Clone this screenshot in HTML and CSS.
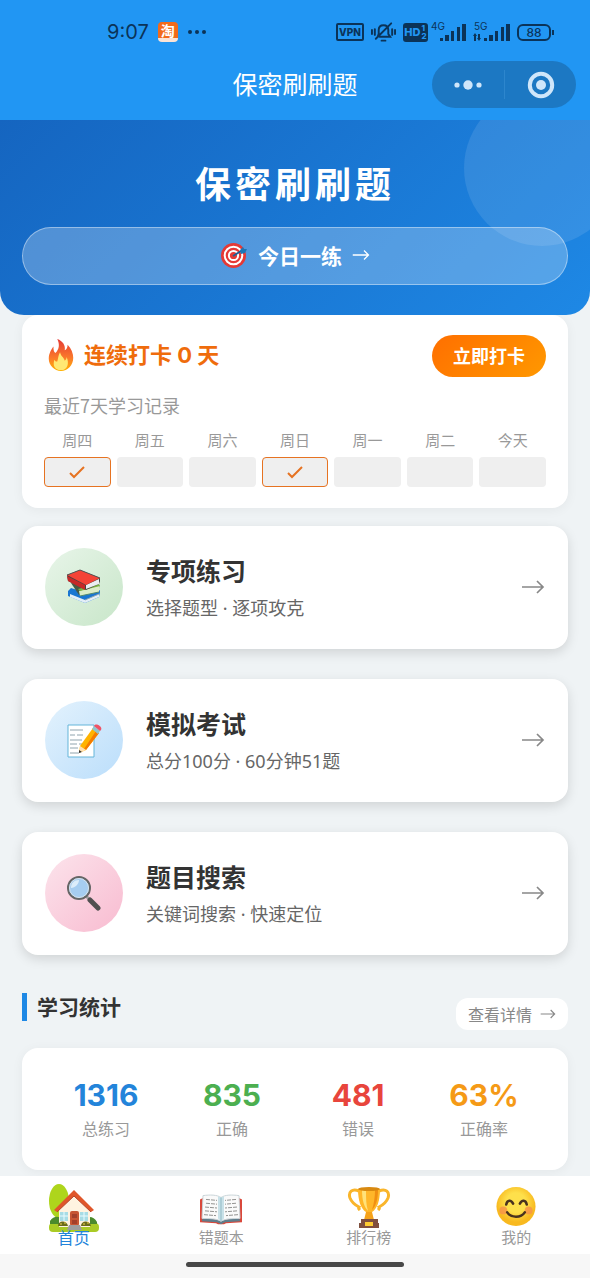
FILE: index.html
```html
<!DOCTYPE html>
<html lang="zh-CN">
<head>
  <meta charset="UTF-8">
  <meta name="viewport" content="width=device-width, initial-scale=1">
  <title>保密刷刷题</title>
  <link rel="stylesheet" href="styles.css">
</head>
<body>
<header class="topbar">
  <div class="status">
    <div class="status-left">
      <span class="time">9:07</span>
      <span class="app">淘</span>
      <svg width="20" height="6" viewBox="0 0 20 6" fill="currentColor"><circle cx="3" cy="3" r="2"/><circle cx="10" cy="3" r="2"/><circle cx="17" cy="3" r="2"/></svg>
    </div>
    <div class="status-right">
      <span class="vpn">VPN</span>
      <svg width="25" height="22" viewBox="0 0 26 22" fill="none" stroke="currentColor" stroke-width="2" stroke-linecap="round">
        <path d="M7 16l1-3V9c0-3 2-5 5-5s5 2 5 5v4l2 3H9M11 20h4M21 2L5 18M4 8v6M1 9v4M22 8v6M25 9v4"/>
      </svg>
      <span class="hd">HD<small>1<br>2</small></span>
      <span class="signal">
        <small>4G</small>
        <svg width="27" height="18" viewBox="0 0 27 18" fill="currentColor"><path d="M1 15h3v3H1zM6 12h4v6H6zM12 8h3v10h-3zM18 4h3v14h-3zM23 1h4v17h-4z"/></svg>
      </span>
      <span class="signal signal-5g">
        <small>5G</small>
        <svg width="37" height="18" viewBox="0 0 37 18" fill="currentColor"><path d="M2 10l2 3H3v5H1v-5H0zM5 11h2v4h1l-2 3-2-3h1zM11 15h3v3h-3zM16 12h4v6h-4zM22 8h3v10h-3zM28 4h3v14h-3zM33 1h4v17h-4z"/></svg>
      </span>
      <span class="battery">88</span>
    </div>
  </div>
  <div class="nav">
    <span class="nav-title">保密刷刷题</span>
    <div class="capsule">
      <button type="button" aria-label="更多">
        <svg width="30" height="12" viewBox="0 0 30 12" fill="currentColor"><circle cx="4" cy="6" r="2.6"/><circle cx="15" cy="6" r="4.7"/><circle cx="26" cy="6" r="2.6"/></svg>
      </button>
      <button type="button" aria-label="关闭">
        <svg width="28" height="28" viewBox="0 0 28 28"><circle cx="14" cy="14" r="11.2" fill="none" stroke="currentColor" stroke-width="4"/><circle cx="14" cy="14" r="5" fill="currentColor"/></svg>
      </button>
    </div>
  </div>
</header>

<section class="hero">
  <h1>保密刷刷题</h1>
  <a class="daily" href="#daily">
    <svg width="28" height="28" viewBox="0 0 28 28">
      <circle cx="13.5" cy="14.5" r="12.5" fill="#e53935"/><circle cx="13.5" cy="14.5" r="8.8" fill="none" stroke="#fff" stroke-width="2"/>
      <circle cx="13.5" cy="14.5" r="4.6" fill="none" stroke="#fff" stroke-width="2"/>
      <path d="M13 15l8-5" stroke="#1f5f94" stroke-width="2"/><path d="M20 9l3-3 1 2 3 0-2 4-4 1z" fill="#1976b8"/>
    </svg>
    今日一练
    <svg class="arrow" width="18" height="14" viewBox="0 0 24 18"><path d="M1 9h21M16 3l6 6-6 6"/></svg>
  </a>
</section>

<main>
  <section class="card checkin">
    <div class="checkin-head">
      <h2>
        <svg width="26" height="32" viewBox="0 0 26 34">
          <defs><linearGradient id="flame" x2="0" y2="1"><stop stop-color="#e53935"/><stop offset=".6" stop-color="#fb7b2a"/><stop offset="1" stop-color="#ffb300"/></linearGradient></defs>
          <path d="M9 0c6 2 9 7 8 12 2-1 3-3 3-6 4 4 6 9 6 14 0 8-6 14-13 14S0 28 0 21c0-6 3-10 5-13 0 3 0 5 2 7 4-4 5-9 2-15z" fill="url(#flame)"/>
          <path d="M12 14c1 5 4 5 5 9 1-1 2-2 2-4 3 7 1 14-6 14S4 28 6 22c1 2 2 2 3 2 1-3 1-7 3-10z" fill="#ffe873"/>
        </svg>
        连续打卡 0 天
      </h2>
      <button class="checkin-btn" type="button">立即打卡</button>
    </div>
    <p class="record-title">最近7天学习记录</p>
    <ul class="week">
      <li>周四<span class="day done"><svg width="18" height="14" viewBox="0 0 18 14"><path d="M2 8l4 4L16 2"/></svg></span></li>
      <li>周五<span class="day"></span></li>
      <li>周六<span class="day"></span></li>
      <li>周日<span class="day done"><svg width="18" height="14" viewBox="0 0 18 14"><path d="M2 8l4 4L16 2"/></svg></span></li>
      <li>周一<span class="day"></span></li>
      <li>周二<span class="day"></span></li>
      <li>今天<span class="day"></span></li>
    </ul>
  </section>

  <nav class="menu">
    <a class="card menu-item" href="#practice">
      <span class="menu-icon green">
        <svg width="36" height="36" viewBox="0 0 36 36">
          <path d="M2 22l3-3 16 5 13-3v2l-1 5-14 6-17-7z" fill="#1976d2"/><path d="M4 25l15 6 14-6v3l-14 6-15-6z" fill="#e3eef7"/>
          <path d="M19 31l14-6" stroke="#90a4ae"/>
          <path d="M5 14l8 12 21-7-1-3z" fill="#455a46"/><path d="M13 22l19-6 2 2-1 5-19 4z" fill="#dcedc8"/><path d="M12 20l21-5 1 2-20 5z" fill="#7cb342"/><path d="M14 27l19-4" stroke="#558b6e"/>
          <path d="M1 6L14 1l20 8v3l-1 3-13 6L2 12z" fill="#424242"/><path d="M1 7l18 9v5L2 12z" fill="#c62828"/><path d="M20 16l13-6v5l-13 5z" fill="#eceff1"/>
          <path d="M1 6l13-5 20 8-14 7z" fill="#f44336"/><path d="M1 6l13-5 20 8" fill="none" stroke="#555"/>
        </svg>
      </span>
      <span class="menu-text"><strong>专项练习</strong><span>选择题型 · 逐项攻克</span></span>
      <svg class="arrow" width="24" height="18" viewBox="0 0 24 18"><path d="M1 9h21M16 3l6 6-6 6"/></svg>
    </a>
    <a class="card menu-item" href="#exam">
      <span class="menu-icon blue">
        <svg width="36" height="36" viewBox="0 0 36 36">
          <path d="M2 3h26v32H2z" fill="#fff" stroke="#64b5d9"/>
          <path d="M4 8h13M4 13h5m2 0h6M4 18h12M4 22h7m2 0h4M4 26h8M4 31h9" stroke="#90a4ae"/>
          <path d="M13 31l1-7L27 6l6 5-13 17z" fill="#ffb300"/><path d="M18 27L30 9l3 2-13 17z" fill="#f57c00"/><path d="M13 31l1-7 6 4z" fill="#ffe0b2"/><path d="M13 31v-3l3 2z" fill="#333"/>
          <path d="M26 7l2-3 6 5-2 3z" fill="#90c5ce"/><path d="M28 4c2-4 9 1 7 4l-1 1z" fill="#ef5366"/>
        </svg>
      </span>
      <span class="menu-text"><strong>模拟考试</strong><span>总分100分 · 60分钟51题</span></span>
      <svg class="arrow" width="24" height="18" viewBox="0 0 24 18"><path d="M1 9h21M16 3l6 6-6 6"/></svg>
    </a>
    <a class="card menu-item" href="#search">
      <span class="menu-icon pink">
        <svg width="36" height="36" viewBox="0 0 36 36">
          <path d="M20 21l5 5" stroke="#9e9e9e" stroke-width="3"/><path d="M24 25l8 8" stroke="#505050" stroke-width="5" stroke-linecap="round"/>
          <circle cx="13" cy="13" r="11" fill="#a6cdf0" stroke="#666" stroke-width="2"/><circle cx="13" cy="13" r="9.5" fill="none" stroke="#d5e2ec"/>
          <path d="M5 13c0-5 3-8 8-8 0 4-4 8-8 8z" fill="#dcedfa"/>
        </svg>
      </span>
      <span class="menu-text"><strong>题目搜索</strong><span>关键词搜索 · 快速定位</span></span>
      <svg class="arrow" width="24" height="18" viewBox="0 0 24 18"><path d="M1 9h21M16 3l6 6-6 6"/></svg>
    </a>
  </nav>

  <section>
    <div class="section-head">
      <h2>学习统计</h2>
      <a class="more" href="#stats">查看详情 <svg class="arrow" width="16" height="12" viewBox="0 0 24 18"><path d="M1 9h21M16 3l6 6-6 6"/></svg></a>
    </div>
    <dl class="card stats">
      <div class="stat total"><dt>总练习</dt><dd>1316</dd></div>
      <div class="stat right"><dt>正确</dt><dd>835</dd></div>
      <div class="stat wrong"><dt>错误</dt><dd>481</dd></div>
      <div class="stat rate"><dt>正确率</dt><dd>63%</dd></div>
    </dl>
  </section>
</main>

<footer class="bottom">
  <nav class="tabs">
    <a class="tab active" href="#home">
      <svg width="50" height="48" viewBox="0 0 50 48">
        <ellipse cx="10" cy="17" rx="10" ry="17" fill="#aed51c"/><rect y="39" width="50" height="9" rx="4" fill="#aacb25"/>
        <path d="M1 37c4-6 10-5 13-1h22c3-5 9-3 12 2v2H1z" fill="#4b8a2c"/>
        <path d="M10 23L26 10l15 13v20H10z" fill="#fff3e0"/><path d="M5 26L25 6l20 20-3 2-17-16L8 28z" fill="#e0562a"/><path d="M8 28l17-16 17 16" fill="none" stroke="#b5452a"/>
        <path d="M11 28h8v9h-8zM31 28h8v9h-8z" fill="#a7dce5"/><path d="M15 28v9M11 32h8M35 28v9M31 32h8" stroke="#e8fbff"/>
        <rect x="21" y="27" width="9" height="15" rx="2" fill="#c75532"/><path d="M23 30h5v4h-5zM23 36h5v4h-5z" fill="#a3402a"/><path d="M20 41h11l2 5H18z" fill="#9e9e9e"/>
        <path d="M9 42c0-6 9-6 10 0zM32 42c0-6 9-6 10 0z" fill="#6b6c1b"/><g fill="#c5b33b"><circle cx="12" cy="40" r="1"/><circle cx="16" cy="39" r="1"/><circle cx="35" cy="40" r="1"/><circle cx="39" cy="39" r="1"/></g>
      </svg>
      首页
    </a>
    <a class="tab" href="#mistakes">
      <svg width="42" height="40" viewBox="0 0 42 42" preserveAspectRatio="none">
        <path d="M0 12l4-2v22l13 1 4 2 4-2 13-1V10l4 2v24l-16 1-2 1h-6l-2-1-16-1z" fill="#d9483b"/>
        <path d="M2 33l3-1 13 1 3 2 3-2 13-1 3 1v2l-15 1-4 2-4-2-15-1z" fill="#607d8b"/>
        <path d="M3 8c7-1 14-1 18 2 4-3 11-3 18-2l1 24c-7 0-15 0-19 3-4-3-12-3-19-3z" fill="#fafafa" stroke="#c9d4d8"/>
        <path d="M18 9l3 1 3-1v23l-3 3-3-3z" fill="#c8e1e8"/><path d="M21 10v25" stroke="#8fb7c3"/>
        <path d="M6 12l11 1M6 16l11 1M5 20l12 1M5 24l12 1M4 28l12 1M36 12l-11 1M36 16l-11 1M37 20l-12 1M37 24l-12 1M38 28l-12 1" stroke="#90908e" stroke-dasharray="4 1"/>
      </svg>
      错题本
    </a>
    <a class="tab" href="#rank">
      <svg width="44" height="42" viewBox="0 0 44 42">
        <path d="M12 5C5 2 1 6 3 12c2 5 5 7 9 9-1 2 0 2 1 3M32 5c7-3 11 1 9 7-2 5-5 7-9 9 1 2 0 2-1 3" fill="none" stroke="#f9b52b" stroke-width="3"/>
        <path d="M19 23h6v3l2 8H17l2-8z" fill="#f6a21a"/><path d="M11 3h22c0 12-3 20-8 23h-6C14 23 11 15 11 3z" fill="#ffb629"/>
        <path d="M15 4h4c0 8 0 15 2 21-4-4-6-11-6-21z" fill="#ffe27a"/><path d="M28 4h3c0 9-2 16-6 20 2-7 3-13 3-20z" fill="#f08f12"/><ellipse cx="22" cy="3" rx="11" ry="2" fill="#d88910"/>
        <path d="M14 33h17v4h1v5H12v-5h2z" fill="#80503f"/><path d="M18 36h8v4h-8z" fill="#ffcc32"/>
      </svg>
      排行榜
    </a>
    <a class="tab" href="#me">
      <svg width="42" height="41" viewBox="0 0 42 42">
        <defs><radialGradient id="face" cx=".5" cy=".4"><stop offset=".5" stop-color="#fee04b"/><stop offset="1" stop-color="#f8b91f"/></radialGradient></defs>
        <circle cx="21" cy="20" r="20" fill="url(#face)"/><circle cx="8" cy="24" r="4" fill="#f58d4c" opacity=".75"/><circle cx="34" cy="24" r="4" fill="#f58d4c" opacity=".75"/>
        <path d="M11 18c1-5 5-5 7-1M25 17c2-4 6-4 7 1M12 26c4 6 14 6 18 0" fill="none" stroke="#4a321e" stroke-width="2.6" stroke-linecap="round"/>
      </svg>
      我的
    </a>
  </nav>
  <div class="home-bar"></div>
</footer>
</body>
</html>
```
FILE: styles.css
```css
* {
  box-sizing: border-box;
}

body {
  margin: 0;
  min-height: 100vh;
  display: flex;
  flex-direction: column;
  background: #eff3f5;
  color: #333;
  font-family: "Noto Sans CJK SC", "Noto Sans", sans-serif;
  font-size: 16px;
}

h1, h2, p, ul, dl, dd {
  margin: 0;
  padding: 0;
}

a {
  color: inherit;
  text-decoration: none;
}

svg {
  display: block;
  flex: none;
}

button {
  border: 0;
  padding: 0;
  font-family: inherit;
  cursor: pointer;
}

.arrow {
  fill: none;
  stroke: currentColor;
  stroke-width: 1.7;
}

/* top bar */
.topbar {
  height: 120px;
  background: #2196f3;
}

.status {
  display: flex;
  justify-content: space-between;
  align-items: center;
  height: 60px;
  padding: 4px 39px 0 107px;
  color: #0b3358;
  font-family: Inter, sans-serif;
}

.status-left,
.status-right {
  display: flex;
  align-items: center;
}

.status-left {
  gap: 9px;
}

.status-right {
  gap: 7px;
}

.time {
  font-size: 20px;
}

.app {
  width: 20px;
  height: 20px;
  border-radius: 4px;
  border-bottom: 4px solid #fbe3d6;
  background: #f26a1b;
  color: #fff;
  font: bold 14px/16px "Noto Sans CJK SC", sans-serif;
  text-align: center;
}

.vpn {
  width: 28px;
  border: 2px solid;
  border-radius: 2px;
  font-size: 10px;
  font-weight: 800;
  line-height: 14px;
  text-align: center;
}

.hd {
  display: flex;
  justify-content: center;
  align-items: center;
  gap: 1px;
  width: 25px;
  height: 19px;
  margin-right: 4px;
  border-radius: 3px;
  background: #0b3358;
  color: #2196f3;
  font-size: 11px;
  font-weight: 800;
}

.hd small {
  font-size: 8px;
  line-height: 8px;
}

.signal {
  position: relative;
}

.signal small {
  position: absolute;
  top: -3px;
  left: -8px;
  font-size: 10px;
  line-height: 12px;
}

.signal-5g small {
  left: 1px;
}

.battery {
  position: relative;
  width: 34px;
  border: 2px solid;
  border-radius: 6px;
  font-size: 12px;
  font-weight: 500;
  line-height: 13px;
  text-align: center;
}

.battery::after {
  content: "";
  position: absolute;
  top: 4px;
  right: -5px;
  width: 2px;
  height: 5px;
  background: #0b3358;
}

.nav {
  position: relative;
  display: flex;
  justify-content: center;
  align-items: center;
  height: 48px;
  padding-bottom: 3px;
}

.nav-title {
  color: #fff;
  font-size: 25px;
}

.capsule {
  position: absolute;
  top: 1px;
  right: 14px;
  display: grid;
  grid-template-columns: 1fr 1fr;
  width: 144px;
  height: 47px;
  border-radius: 24px;
  background: #1c78c3;
}

.capsule button {
  display: grid;
  place-items: center;
  margin: 9px 0;
  background: none;
  color: #cfe6fa;
}

.capsule button + button {
  border-left: 1px solid #2d86cd;
}

/* hero */
.hero {
  position: relative;
  overflow: hidden;
  padding: 37px 22px 30px;
  border-radius: 0 0 24px 24px;
  background: linear-gradient(135deg, #1565c0, #1e88e5);
  color: #fff;
}

.hero::before {
  content: "";
  position: absolute;
  top: -30px;
  right: -30px;
  width: 156px;
  height: 156px;
  border-radius: 50%;
  background: rgba(255, 255, 255, .1);
}

.hero h1 {
  margin-bottom: 20px;
  font-size: 36px;
  line-height: 50px;
  letter-spacing: 4px;
  text-align: center;
}

.daily {
  position: relative;
  display: flex;
  justify-content: center;
  align-items: center;
  gap: 10px;
  height: 58px;
  padding-bottom: 2px;
  border: 1px solid rgba(255, 255, 255, .4);
  border-radius: 29px;
  background: rgba(255, 255, 255, .25);
  font-size: 21px;
  font-weight: bold;
}

/* content */
main {
  flex: 1;
  padding: 0 22px 6px;
}

.card {
  border-radius: 16px;
  background: #fff;
  box-shadow: 0 2px 12px rgba(0, 0, 0, .05);
}

.checkin {
  padding: 20px 22px 21px;
}

.checkin-head {
  display: flex;
  justify-content: space-between;
  align-items: center;
}

.checkin h2 {
  display: flex;
  align-items: center;
  gap: 10px;
  padding: 0 0 2px 4px;
  color: #ef6c0c;
  font-family: Inter, "Noto Sans CJK SC", sans-serif;
  font-size: 22px;
  line-height: 34px;
}

.checkin-btn {
  width: 114px;
  height: 42px;
  padding-bottom: 2px;
  border-radius: 21px;
  background: linear-gradient(135deg, #ff6f00, #ff9800);
  color: #fff;
  font-size: 18px;
  font-weight: bold;
}

.record-title {
  margin: 16px 0 13px;
  color: #999;
  font-size: 18px;
  line-height: 24px;
}

.week {
  display: grid;
  grid-template-columns: repeat(7, 1fr);
  gap: 6px;
  color: #999;
  font-size: 15px;
  line-height: 20px;
  list-style: none;
  text-align: center;
}

.day {
  display: grid;
  place-items: center;
  height: 30px;
  margin-top: 7px;
  border-radius: 4px;
  background: #efefef;
}

.done {
  border: 1px solid #e67322;
}

.done svg {
  fill: none;
  stroke: #e67322;
  stroke-width: 2;
}

.menu {
  display: grid;
  gap: 30px;
  margin: 18px 0 38px;
}

.menu-item {
  display: flex;
  align-items: center;
  gap: 23px;
  height: 123px;
  padding: 0 23px 2px;
  box-shadow: 0 4px 12px rgba(0, 0, 0, .13);
}

.menu-item .arrow {
  color: #888;
}

.menu-icon {
  display: grid;
  place-items: center;
  width: 78px;
  height: 78px;
  border-radius: 50%;
}

.green {
  background: linear-gradient(135deg, #e8f5e9, #c8e6c9);
}

.blue {
  background: linear-gradient(135deg, #e3f2fd, #bbdefb);
}

.pink {
  background: linear-gradient(135deg, #fce4ec, #f8bbd0);
}

.menu-text {
  display: grid;
  flex: 1;
  gap: 6px;
  color: #666;
  font-family: "Noto Sans", "Noto Sans CJK SC", sans-serif;
  font-size: 18px;
  line-height: 26px;
}

.menu-text strong {
  color: #333;
  font-size: 25px;
  line-height: 36px;
}

.section-head {
  display: flex;
  justify-content: space-between;
  align-items: flex-end;
  height: 37px;
  margin-bottom: 18px;
}

.section-head h2 {
  align-self: flex-start;
  padding: 0 0 2px 10px;
  border-left: 5px solid #1e88e5;
  font-size: 21px;
  line-height: 26px;
}

.more {
  display: flex;
  align-items: center;
  gap: 8px;
  padding: 0 12px;
  border-radius: 12px;
  background: #fff;
  color: #888;
  font-size: 16px;
  line-height: 32px;
}

.stats {
  display: grid;
  grid-template-columns: repeat(4, 1fr);
  padding: 27px 21px 30px;
}

.stat {
  display: flex;
  flex-direction: column-reverse;
  align-items: center;
}

.stat dt {
  margin-top: 1px;
  color: #999;
  font-size: 16px;
  line-height: 24px;
}

.stat dd {
  font-family: Inter, "Noto Sans CJK SC", sans-serif;
  font-size: 30px;
  font-weight: bold;
  line-height: 40px;
}

.total dd {
  color: #2384da;
}

.right dd {
  color: #4caf50;
}

.wrong dd {
  color: #e8453c;
}

.rate dd {
  color: #f59a16;
}

/* tab bar */
.bottom {
  position: sticky;
  bottom: 0;
}

.tabs {
  display: grid;
  grid-template-columns: repeat(4, 1fr);
  height: 78px;
  padding-bottom: 8px;
  background: #fff;
}

.tab {
  display: flex;
  flex-direction: column;
  justify-content: flex-end;
  align-items: center;
  color: #999;
  font-size: 15px;
  line-height: 18px;
}

.active {
  color: #2384da;
  font-size: 16px;
}

.active svg {
  margin-bottom: -4px;
}

.home-bar {
  display: flex;
  justify-content: center;
  height: 24px;
  padding-top: 8px;
  background: #f7f7f7;
}

.home-bar::before {
  content: "";
  width: 37%;
  height: 5px;
  border-radius: 3px;
  background: #484848;
}
```
